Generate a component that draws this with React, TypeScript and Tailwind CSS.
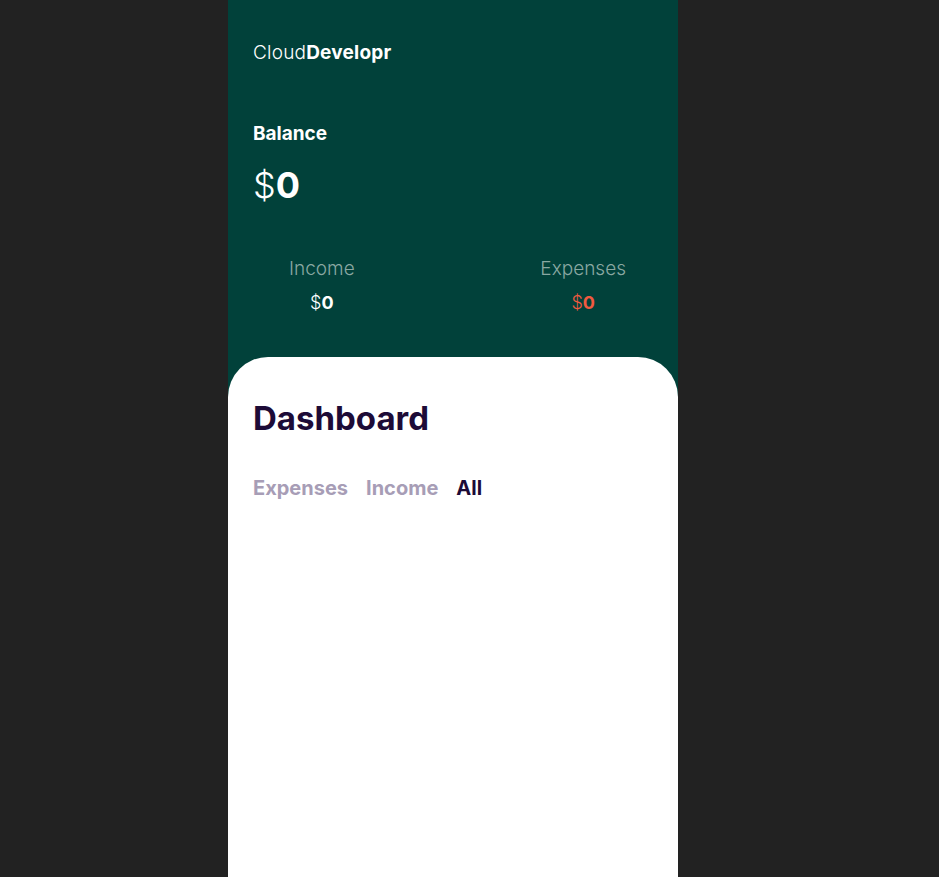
export default function App() {
  const font = { fontFamily: '"Inter", "Noto Sans", sans-serif' };
  return (
    <div className="min-h-[877px] w-full bg-[#222222] flex justify-center pr-[33px]" style={font}>
      <div className="w-[450px] bg-[#01413a] flex flex-col">
        <div className="px-[25px] pt-[39px]">
          <div className="text-[19px] leading-[28px] text-white tracking-[0.2px]">
            <span className="font-light">Cloud</span>
            <span className="font-bold">Developr</span>
          </div>
          <div className="mt-[55px] text-[19px] leading-[24px] font-bold text-white">Balance</div>
          <div className="mt-[17px] text-[36px] leading-[44px] text-white">
            <span className="font-light">$</span>
            <span className="font-bold">0</span>
          </div>
        </div>
        <div className="mt-[50px] flex justify-between pl-[61px] pr-[52px]">
          <div className="flex flex-col items-center">
            <div className="text-[19px] leading-[24px] font-light text-[#8aa8a2]">Income</div>
            <div className="mt-[10px] text-[18px] leading-[24px] text-white">
              <span className="font-light">$</span>
              <span className="font-bold">0</span>
            </div>
          </div>
          <div className="flex flex-col items-center">
            <div className="text-[19px] leading-[24px] font-light text-[#8aa8a2]">Expenses</div>
            <div className="mt-[10px] text-[18px] leading-[24px] text-[#f15a40]">
              <span className="font-light">$</span>
              <span className="font-bold">0</span>
            </div>
          </div>
        </div>
        <div className="mt-[42px] flex-1 bg-white rounded-t-[40px] px-[25px] pt-[41px]">
          <h1 className="text-[33px] leading-[40px] font-bold text-[#1d0b37]">Dashboard</h1>
          <div className="mt-[36px] flex gap-[18px] text-[20px] leading-[28px] font-bold">
            <span className="text-[#a79db6]">Expenses</span>
            <span className="text-[#a79db6]">Income</span>
            <span className="text-[#1d0b37]">All</span>
          </div>
        </div>
      </div>
    </div>
  );
}
